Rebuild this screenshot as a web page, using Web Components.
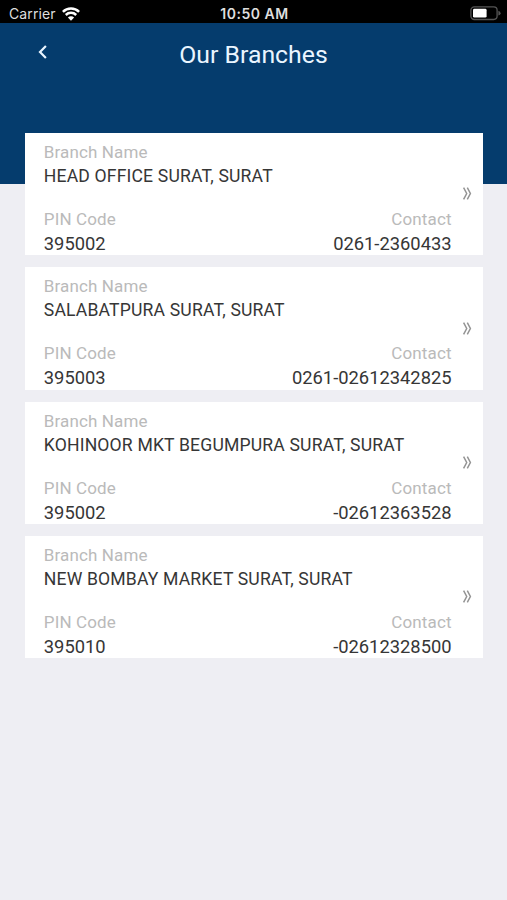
<!DOCTYPE html>
<html lang="en">
<head>
  <meta charset="utf-8">
  <meta name="viewport" content="width=device-width, initial-scale=1">
  <title>Our Branches</title>
  <style>
    body {
      margin: 0;
      background: #eeeef3;
      font-family: Roboto, sans-serif;
    }
  </style>
</head>
<body>
  <branches-page>
    <status-bar slot="status" carrier="Carrier" time="10:50 AM"></status-bar>
    <page-header slot="header">Our Branches</page-header>
    <branch-card name="HEAD OFFICE SURAT, SURAT" pin="395002" contact="0261-2360433"></branch-card>
    <branch-card name="SALABATPURA SURAT, SURAT" pin="395003" contact="0261-02612342825"></branch-card>
    <branch-card name="KOHINOOR MKT BEGUMPURA SURAT, SURAT" pin="395002" contact="-02612363528"></branch-card>
    <branch-card name="NEW BOMBAY MARKET SURAT, SURAT" pin="395010" contact="-02612328500"></branch-card>
  </branches-page>

  <script>
    class StatusBar extends HTMLElement {
      constructor() {
        super();
        this.attachShadow({ mode: 'open' });
      }
      connectedCallback() {
        this.shadowRoot.innerHTML = `
          <style>
            :host {
              display: grid;
              grid-template-columns: 1fr auto 1fr;
              align-items: center;
              box-sizing: border-box;
              height: 23px;
              padding: 4px 6px 0 8px;
              background: #000;
              color: #dedede;
              font: 14px/19px Inter, sans-serif;
            }
            .left {
              display: flex;
              align-items: center;
              gap: 6px;
              padding-left: 1px;
            }
            .carrier {
              letter-spacing: 0.1px;
            }
            .time {
              font-size: 14px;
              font-weight: 600;
              letter-spacing: 0.5px;
            }
            .battery {
              justify-self: end;
            }
            svg {
              display: block;
            }
          </style>
          <div class="left">
            <span class="carrier">${this.getAttribute('carrier')}</span>
            <svg class="wifi" width="18" height="14" viewBox="0 0 18 14" fill="none" stroke="#fff" stroke-width="2.5">
              <path d="M.9 4.9a11.5 11.5 0 0 1 16.2 0"/>
              <path d="M3.8 8a7.4 7.4 0 0 1 10.4 0"/>
              <path d="M9 13.7 5.9 10.5a4.4 4.4 0 0 1 6.2 0z" fill="#fff" stroke="none"/>
            </svg>
          </div>
          <span class="time">${this.getAttribute('time')}</span>
          <svg class="battery" width="31" height="15" viewBox="0 0 31 15">
            <rect x=".9" y=".9" width="26.2" height="12.6" rx="3.4" fill="none" stroke="#555" stroke-width="1.3"/>
            <rect x="3" y="2.8" width="13.6" height="8.8" rx="1.4" fill="#fff"/>
            <path d="M28.4 4.8q2.2.8 2.2 2.4t-2.2 2.4z" fill="#555"/>
          </svg>
        `;
      }
    }

    class PageHeader extends HTMLElement {
      constructor() {
        super();
        this.attachShadow({ mode: 'open' });
      }
      connectedCallback() {
        this.shadowRoot.innerHTML = `
          <style>
            :host {
              display: grid;
              grid-template-columns: 60px 1fr 60px;
              align-items: start;
              box-sizing: border-box;
              height: 161px;
              padding-top: 15px;
              background: #053c6d;
              color: #eaf5ff;
            }
            button {
              display: flex;
              justify-content: flex-end;
              padding: 7px 12px 0 0;
              border: 0;
              background: none;
              color: inherit;
            }
            h1 {
              margin: 1px 0 0;
              font-size: 24.8px;
              font-weight: 400;
              line-height: 32px;
              text-align: center;
            }
          </style>
          <button aria-label="Back">
            <svg width="10" height="14" viewBox="0 0 10 14" fill="none" stroke="currentColor" stroke-width="2.2">
              <path d="M7.9 1 2 7l5.9 6"/>
            </svg>
          </button>
          <h1><slot></slot></h1>
        `;
      }
    }

    class BranchCard extends HTMLElement {
      constructor() {
        super();
        this.attachShadow({ mode: 'open' });
      }
      connectedCallback() {
        this.shadowRoot.innerHTML = `
          <style>
            :host {
              display: grid;
              grid-template-columns: 1fr 31px;
              box-sizing: border-box;
              height: 122.3px;
              padding: 7px 0 0 18.4px;
              background: #fff;
              color: #363636;
              white-space: nowrap;
            }
            .label {
              color: #bababa;
              font-size: 17px;
              line-height: 24px;
              letter-spacing: 0.13px;
            }
            .name {
              font-size: 17.6px;
              line-height: 24px;
              letter-spacing: 0.16px;
            }
            .row {
              display: flex;
              justify-content: space-between;
              margin-top: 19px;
            }
            .value {
              font-size: 18.35px;
              line-height: 25px;
            }
            .right {
              text-align: right;
            }
            .more {
              padding: 47.4px 0 0 10px;
            }
            svg {
              display: block;
            }
          </style>
          <div>
            <div class="label">Branch Name</div>
            <div class="name">${this.getAttribute('name')}</div>
            <div class="row">
              <div>
                <div class="label">PIN Code</div>
                <div class="value">${this.getAttribute('pin')}</div>
              </div>
              <div class="right">
                <div class="label">Contact</div>
                <div class="value">${this.getAttribute('contact')}</div>
              </div>
            </div>
          </div>
          <div class="more">
            <svg width="10" height="13" viewBox="0 0 10 13" fill="none" stroke="#949494" stroke-width="1.5">
              <path d="M1.6.7 4.7 6.5 1.6 12.3M5.3.7l3.1 5.8-3.1 5.8"/>
            </svg>
          </div>
        `;
      }
    }

    class BranchesPage extends HTMLElement {
      constructor() {
        super();
        this.attachShadow({ mode: 'open' });
      }
      connectedCallback() {
        this.shadowRoot.innerHTML = `
          <style>
            :host {
              display: block;
              min-height: 900px;
              background: #eeeef3;
            }
            /* the list is pulled up over the header */
            main {
              display: flex;
              flex-direction: column;
              gap: 12px;
              margin: -51px 24.4px 0 25.4px;
            }
          </style>
          <slot name="status"></slot>
          <slot name="header"></slot>
          <main><slot></slot></main>
        `;
      }
    }

    customElements.define('status-bar', StatusBar);
    customElements.define('page-header', PageHeader);
    customElements.define('branch-card', BranchCard);
    customElements.define('branches-page', BranchesPage);
  </script>
</body>
</html>
